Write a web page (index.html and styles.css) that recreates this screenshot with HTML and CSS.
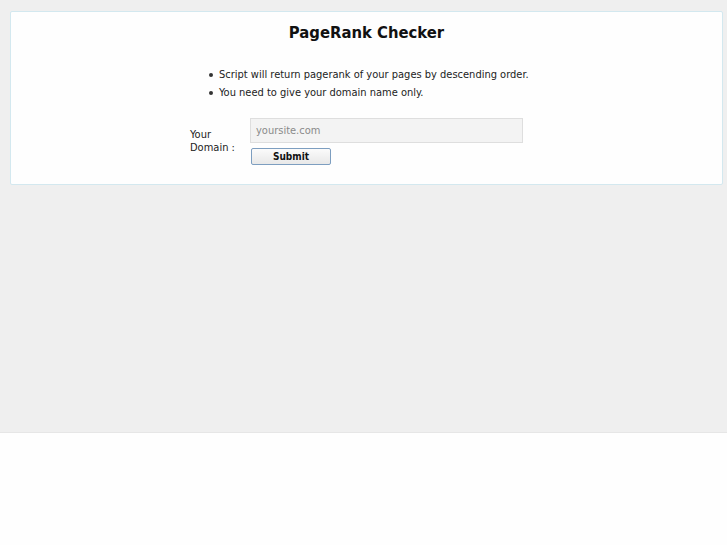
FILE: index.html
```html
<!DOCTYPE html>
<html lang="en">
<head>
    <meta charset="UTF-8">
    <title>PageRank Checker</title>
    <link rel="stylesheet" href="styles.css">
</head>
<body>
    <div class="page">
        <div class="card">
            <h1>PageRank Checker</h1>
            <ul class="notes">
                <li>Script will return pagerank of your pages by descending order.</li>
                <li>You need to give your domain name only.</li>
            </ul>
            <form class="check-form" onsubmit="return false;">
                <label for="domain">Your Domain :</label>
                <div class="fields">
                    <input type="text" id="domain" placeholder="yoursite.com">
                    <button type="submit">Submit</button>
                </div>
            </form>
        </div>
    </div>
</body>
</html>
```

FILE: styles.css
```css
html, body {
    margin: 0;
    padding: 0;
    background: #fefefe;
}
body {
    font-family: "DejaVu Sans Condensed", "DejaVu Sans", sans-serif;
    font-stretch: condensed;
    font-size: 11px;
    color: #222;
}
.page {
    background: #efefef;
    height: 433px;
    padding: 11px 4px 0 10px;
    box-sizing: border-box;
    border-bottom: 1px solid #e6e6e6;
}
.card {
    background: #fefefe;
    border: 1px solid #d3e8ef;
    border-radius: 2px;
    height: 174px;
    box-sizing: border-box;
}
h1 {
    margin: 0;
    padding-top: 11px;
    text-align: center;
    font-size: 16.5px;
    font-weight: bold;
    color: #111;
}
.notes {
    margin: 24px 0 0 198px;
    padding: 0 0 0 10px;
    list-style: none;
}
.notes li {
    position: relative;
    line-height: 18px;
}
.notes li::before {
    content: "";
    position: absolute;
    left: -10px;
    top: 7px;
    width: 4px;
    height: 4px;
    border-radius: 50%;
    background: #333;
}
.check-form {
    display: flex;
    margin: 16px 0 0 179px;
}
.check-form label {
    width: 50px;
    padding-top: 10px;
    margin-right: 10px;
    line-height: 13px;
}
.fields {
    display: flex;
    flex-direction: column;
    align-items: flex-start;
}
.fields input {
    width: 273px;
    height: 25px;
    box-sizing: border-box;
    border: 1px solid #dedede;
    background: #f3f3f3;
    font-family: "DejaVu Sans Condensed", "DejaVu Sans", sans-serif;
    font-stretch: condensed;
    font-size: 11px;
    padding: 0 5px;
    color: #333;
    outline: none;
}
.fields input::placeholder {
    color: #8a8a8a;
}
.fields button {
    margin: 5px 0 0 1px;
    width: 80px;
    height: 17px;
    padding: 0;
    box-sizing: border-box;
    border: 1px solid #7d9ec0;
    border-radius: 2px;
    background: linear-gradient(#fbfbfb, #e8e8e8);
    font-family: "DejaVu Sans Condensed", "DejaVu Sans", sans-serif;
    font-stretch: condensed;
    font-size: 10px;
    font-weight: bold;
    color: #111;
    cursor: pointer;
}
```
